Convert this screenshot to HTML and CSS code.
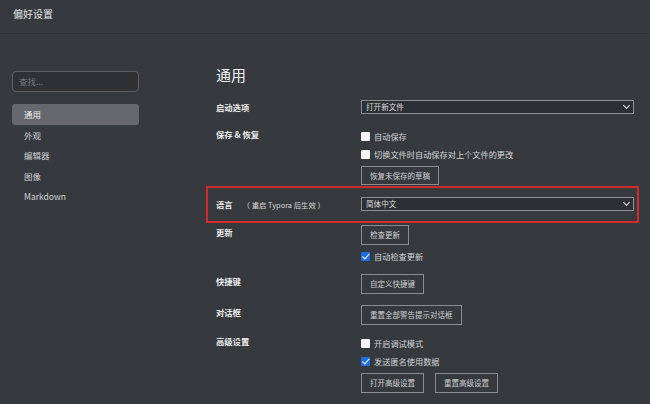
FILE: index.html
```html
<!DOCTYPE html>
<html lang="zh-CN">
<head>
  <meta charset="UTF-8" />
  <meta name="viewport" content="width=device-width, initial-scale=1.0"/>
  <title>偏好设置</title>
  <link rel="stylesheet" href="styles.css">
</head>
<body>
  <div class="titlebar">偏好设置</div>

  <div class="layout">
    <aside class="sidebar">
      <div class="search">查找...</div>
      <ul class="nav">
        <li class="nav-item active">通用</li>
        <li class="nav-item">外观</li>
        <li class="nav-item">编辑器</li>
        <li class="nav-item">图像</li>
        <li class="nav-item">Markdown</li>
      </ul>
    </aside>

    <main class="content">
      <h1 class="heading">通用</h1>

      <div class="row row-startup">
        <div class="label">启动选项</div>
        <div class="control">
          <div class="select">打开新文件<span class="chevron"></span></div>
        </div>
      </div>

      <div class="row row-save">
        <div class="label">保存 &amp; 恢复</div>
        <div class="control">
          <div class="check"><span class="box"></span>自动保存</div>
          <div class="check"><span class="box"></span>切换文件时自动保存对上个文件的更改</div>
          <button class="btn">恢复未保存的草稿</button>
        </div>
      </div>

      <div class="row row-lang">
        <div class="label">语言<span class="hint">（ 重启 Typora 后生效 ）</span></div>
        <div class="control">
          <div class="select">简体中文<span class="chevron"></span></div>
        </div>
      </div>

      <div class="row row-update">
        <div class="label">更新</div>
        <div class="control">
          <button class="btn">检查更新</button>
          <div class="check"><span class="box checked"></span>自动检查更新</div>
        </div>
      </div>

      <div class="row row-keys">
        <div class="label">快捷键</div>
        <div class="control">
          <button class="btn">自定义快捷键</button>
        </div>
      </div>

      <div class="row row-dialog">
        <div class="label">对话框</div>
        <div class="control">
          <button class="btn">重置全部警告提示对话框</button>
        </div>
      </div>

      <div class="row row-advanced">
        <div class="label">高级设置</div>
        <div class="control">
          <div class="check"><span class="box"></span>开启调试模式</div>
          <div class="check"><span class="box checked"></span>发送匿名使用数据</div>
          <div class="btn-group">
            <button class="btn">打开高级设置</button>
            <button class="btn">重置高级设置</button>
          </div>
        </div>
      </div>
    </main>
  </div>
</body>
</html>
```

FILE: styles.css
```css
* {
  box-sizing: border-box;
}
body {
  margin: 0;
  height: 404px;
  overflow: hidden;
  background-color: #363a3f;
  color: #d6d7d9;
  font-family: "Noto Sans CJK SC", "Noto Sans", sans-serif;
  font-size: 8.5px;
}
.titlebar {
  height: 34px;
  padding: 7px 0 0 13px;
  font-size: 10px;
  line-height: 14px;
  color: #e4e5e6;
  border-bottom: 1px solid #2f3237;
}
.layout {
  display: grid;
  grid-template-columns: 152px 1fr;
}
.sidebar {
  padding: 37px 13px 0 12px;
}
.search {
  height: 21px;
  padding-left: 6px;
  line-height: 19px;
  border: 1px solid #5d6065;
  border-radius: 4px;
  background-color: #2f3134;
  color: #75787c;
}
.nav {
  list-style: none;
  margin: 12px 0 0;
  padding: 0;
}
.nav-item {
  height: 20.5px;
  line-height: 20.5px;
  padding-left: 12px;
  border-radius: 3px;
  color: #d0d1d3;
}
.nav-item.active {
  background-color: #66686d;
  color: #f2f2f2;
}
.content {
  padding: 31px 0 0 54px;
}
.heading {
  margin: 0 0 15px 10px;
  font-size: 15px;
  font-weight: normal;
  line-height: 20px;
  color: #f0f0f0;
}
.row {
  display: grid;
  grid-template-columns: 145px 273px;
  padding-left: 10px;
  width: 433px;
}
.label {
  font-weight: bold;
  font-size: 8.3px;
  line-height: 14px;
  color: #eaeaea;
}
.hint {
  margin-left: 10px;
  font-weight: normal;
  font-size: 7.4px;
  color: #d8d8d8;
}
.control {
  display: flex;
  flex-direction: column;
  align-items: flex-start;
}
.select {
  position: relative;
  width: 273px;
  height: 14px;
  padding-left: 4px;
  font-size: 7.6px;
  line-height: 12px;
  border: 1px solid #8c8f93;
  background-color: #2c3035;
  color: #dcdcdc;
}
.chevron {
  position: absolute;
  right: 4px;
  top: 2px;
  width: 5px;
  height: 5px;
  border-right: 1.5px solid #e8e8e8;
  border-bottom: 1.5px solid #e8e8e8;
  transform: rotate(45deg);
}
.check {
  display: flex;
  align-items: center;
  height: 18px;
  font-size: 8.2px;
  color: #d4d5d7;
}
.box {
  width: 9px;
  height: 9px;
  margin-right: 4px;
  background-color: #f4f4f4;
  border-radius: 1px;
}
.box.checked {
  position: relative;
  background-color: #1b6fe0;
}
.box.checked::after {
  content: "";
  position: absolute;
  left: 3px;
  top: 0.5px;
  width: 2.5px;
  height: 5.5px;
  border-right: 1.5px solid #fff;
  border-bottom: 1.5px solid #fff;
  transform: rotate(40deg);
}
.btn {
  height: 20px;
  padding: 0 8px;
  border: 1px solid #8a8d91;
  background-color: transparent;
  color: #cfd0d2;
  font-family: inherit;
  font-size: 7.5px;
  line-height: 18px;
}
.btn-group {
  display: flex;
  gap: 11px;
  margin-top: 3px;
}
.row-save .btn {
  margin-top: 3px;
  height: 19px;
}
.row-startup {
  margin-bottom: 13px;
}
.row-save {
  margin-bottom: 1px;
}
.row-lang {
  width: 433px;
  padding: 9px 5px 9px 8px;
  border: 2px solid #d12a2a;
  margin-bottom: 2px;
}
.row-update .check {
  margin-top: 2px;
}
.row-update {
  margin-bottom: 9px;
}
.row-keys {
  margin-bottom: 11px;
}
.row-dialog {
  margin-bottom: 9px;
}
```
